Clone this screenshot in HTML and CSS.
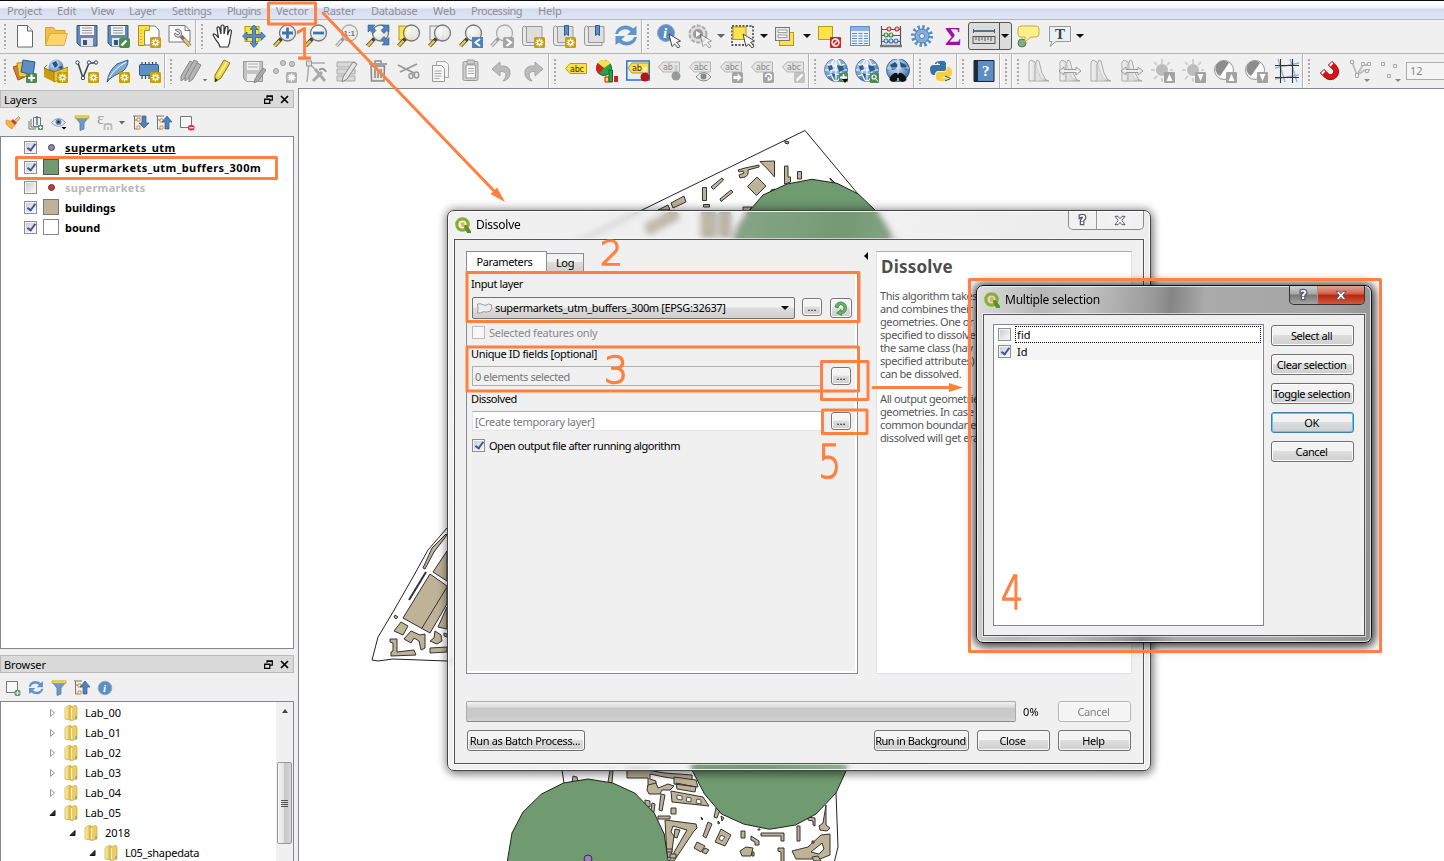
FILE: index.html
```html
<!DOCTYPE html>
<html lang="en">
<head>
<meta charset="utf-8">
<title>QGIS - Dissolve</title>
<link rel="stylesheet" href="styles.css">
</head>
<body>
<svg class="defs" width="0" height="0" aria-hidden="true">
<defs>
<linearGradient id="gfold" x1="0" x2="1"><stop offset="0" stop-color="#fff3b0"/><stop offset="1" stop-color="#dcb545"/></linearGradient>
<radialGradient id="gball" cx=".35" cy=".3" r=".8"><stop offset="0" stop-color="#fff"/><stop offset="1" stop-color="#d8dcd8"/></radialGradient>
<radialGradient id="gglobe" cx=".4" cy=".3" r=".8"><stop offset="0" stop-color="#e4effa"/><stop offset=".6" stop-color="#6d9bcb"/><stop offset="1" stop-color="#27517f"/></radialGradient>
<linearGradient id="ggrey" x1="0" x2="1"><stop offset="0" stop-color="#f4f4f4"/><stop offset="1" stop-color="#a8a8a8"/></linearGradient>

<g id="badge"><rect x="13" y="13" width="11" height="11" rx="1.5" fill="#c8a000"/><path d="M18.500 14.500v8M14.500 18.500h8M15.700 15.700l5.600 5.600M21.300 15.700l-5.600 5.600" stroke="#fff" stroke-width="1.500"/><circle cx="18.500" cy="18.500" r="1.300" fill="#c8a000"/></g>
<g id="badgeg"><rect x="13" y="13" width="11" height="11" rx="1.500" fill="#b0b0b0"/><path d="M18.500 14.500v8M14.500 18.500h8M15.700 15.700l5.600 5.600M21.300 15.700l-5.600 5.600" stroke="#fff" stroke-width="1.500"/></g>
<g id="lens"><path d="M8.500 14.500l-7 7.500" stroke="#444" stroke-width="4"/><path d="M6.500 16.700l-5 5.300" stroke="#f5c93b" stroke-width="2.400"/><circle cx="14.500" cy="9" r="8" fill="url(#gball)" fill-opacity=".85" stroke="#777" stroke-width="1.300"/></g>
<g id="lensg"><path d="M8.500 14.500l-7 7.500" stroke="#999" stroke-width="3.500"/><path d="M6.500 16.700l-5 5.300" stroke="#ddd" stroke-width="1.800"/><circle cx="14.500" cy="9" r="8" fill="#eee" stroke="#aaa" stroke-width="1.300"/></g>
<g id="tag"><path d="M1.500 11L6 6h16.500v10H6z" fill="#fbe04a" stroke="#b79a16"/><text class="abc" x="6" y="14" fill="#333">abc</text></g>
<g id="tagg"><path d="M1.500 8L6 3h16.500v10H6z" fill="#e4e4e4" stroke="#b5b5b5"/><text class="abc" x="6" y="11" fill="#888">abc</text></g>
<g id="gb"><rect x="13" y="13" width="11" height="11" rx="1.500" fill="#a5a5a5"/></g>
<g id="globe"><circle cx="12" cy="11" r="11.500" fill="url(#gglobe)" stroke="#56799f" stroke-width=".8"/><g fill="none" stroke="#fff" stroke-width="1.100"><ellipse cx="12" cy="11" rx="5" ry="11"/><path d="M12 0v22M1 11h22M3 5q9 4 18 0M3 17q9-4 18 0"/></g><path d="M4 7l4-1 1 4-4 2zM13 6l6 1 1 4-5 2zM7 14l4 1-1 4z" fill="#2c5d92"/></g>
<g id="curs"><path d="M12 10l3 12.500 2.700-2.600 3.300 4.100 2-1.600-3.300-4 3.800-1.400z" fill="#fff" stroke="#444"/></g>
<g id="hist"><path d="M2 22V3l2-2 4 2 3 9 3 7 8 3z" fill="url(#ggrey)" stroke="#aaa"/><path d="M8 22V6l2-5 2 1 3 12 4 7" fill="#e8e8e8" fill-opacity=".6" stroke="#aaa"/></g>
<g id="harr"><path d="M1 12l5-4v2.500h12V8l5 4-5 4v-2.500H6V16z" fill="#eee" stroke="#999"/></g>
<g id="sun"><g stroke="#d0d0d0" stroke-width="2"><path d="M11 0v5M11 19v4M0 11h4M3 3l3 3M19 3l-3 3M3 20l3-3M19 11h3"/></g><circle cx="11" cy="11" r="6" fill="#bcbcbc"/></g>
<g id="contrast"><circle cx="11" cy="11" r="9.500" fill="#f3f3f3" stroke="#999"/><circle cx="12" cy="11" r="7.500" fill="#fff"/><path d="M16 4a8 8 0 1 0-9 13z" fill="#8d8d8d"/></g>
<g id="up"><rect x="13" y="13" width="11" height="11" rx="1" fill="#a2a2a2"/><path d="M18.500 15l3 7h-6z" fill="#fff"/></g>
<g id="down"><rect x="13" y="13" width="11" height="11" rx="1" fill="#a2a2a2"/><path d="M18.500 22l3-7h-6z" fill="#fff"/></g>
<g id="flop"><path d="M2 1.500h20v20.500H5l-3-3z" fill="#6488b8" stroke="#36557f"/><path d="M5 2h14v9H5z" fill="#f3f3f3"/><path d="M7 4h10M7 6.500h10M7 9h10" stroke="#999"/><path d="M6 14h12v8H6z" fill="#e6e6e6"/><path d="M8 16h4v5H8z" fill="#36557f"/></g>
<g id="refresh" fill="#5f94cf"><path d="M1 10Q3 2 11 1.500q5 0 8 3L22.500 2v9H13l3.500-3.500q-3-3-7-2Q5 6.500 4 10z"/><path d="M23 13q-2 8-10 8.500-5 0-8-3L1.500 21v-9H11l-3.500 3.500q3 3 7 2 4.500-1 5.500-4.500z"/></g>
<g id="book"><path d="M5.500 18V5q0-3-2-3T1.500 5v14q0 2.500 2.500 2.500h15V19" fill="#e8e8e8" stroke="#999"/><path d="M5.500 2.500V18.500H21V2.500z" fill="#dedede" stroke="#999"/></g>

<symbol id="i-new" viewBox="0 0 24 24"><path d="M4.500 1.500h10l5 5.500v16h-15z" fill="#fff" stroke="#666"/><path d="M14.500 1.500V7h5" fill="#eee" stroke="#666"/></symbol>
<symbol id="i-open" viewBox="0 0 24 24"><path d="M1.500 21V3.500h8l2 3h9.500v4" fill="#f0bf46" stroke="#d5a033"/><path d="M1.500 21.500L6 9.500h17.500L20 21.500z" fill="#fdd469" stroke="#dfab3d"/></symbol>
<symbol id="i-save" viewBox="0 0 24 24"><use href="#flop"/></symbol>
<symbol id="i-saveas" viewBox="0 0 24 24"><use href="#flop"/><rect x="13" y="14" width="11" height="10" rx="2" fill="#4c8a50"/><path d="M15.500 21.500l5-5" stroke="#fff" stroke-width="2.300"/></symbol>
<symbol id="i-layout" viewBox="0 0 24 24"><path d="M7 2h11l4 4v15H7z" fill="#fff" stroke="#777"/><path d="M1.500 1.500h11v5h-5v15h-6z" fill="#fbe04a" stroke="#a98d1c"/><path d="M4 6v13M9 4v1" stroke="#a98d1c" stroke-dasharray="1 2"/><use href="#badge"/></symbol>
<symbol id="i-mgr" viewBox="0 0 24 24"><path d="M1 1.500h16l5 5V18H1z" fill="#fff" stroke="#777"/><path d="M17 1.500v5h5" fill="none" stroke="#777"/><path d="M13 12l9 10" stroke="#777" stroke-width="4"/><path d="M16 15l6 7" stroke="#f0c75e" stroke-width="2.500"/><path d="M7 6q3-2 5 0 3 2 1 6-3 3-6 0-1-2 0-3l3 2 2-2z" fill="#ddd" stroke="#777"/></symbol>
<symbol id="i-pan" viewBox="0 0 24 24"><path d="M9 23q-1-4-4-7l-3-5q1-2.500 4 1l1.500 2L6 4q.5-2 2.500-.5L10 10V2q1.500-2 3 0v8l1.500-7q2-1.500 2.500.5L16.500 11l2-5q2-.5 2 1.500L19 15q0 4-2 8z" fill="#fff" stroke="#333" stroke-width="1.200"/></symbol>
<symbol id="i-pansel" viewBox="0 0 24 24"><rect x="3" y="2.500" width="14" height="15" fill="#fbe34c" stroke="#b79a16"/><path d="M12 1l4 4.500H13.500v5H19V8l4.500 4-4.500 4.500v-3h-5.500V19h2.500L12 23.500l-4-4.500h2.500v-5.500H5v3L.5 12 5 8v2.500h5.500v-5H8z" fill="#5d8dc3" stroke="#2d5b91" stroke-width=".8"/></symbol>
<symbol id="i-zin" viewBox="0 0 24 24"><use href="#lens"/><path d="M14.500 3.500v11M9 9h11" stroke="#3f73b0" stroke-width="2.800"/></symbol>
<symbol id="i-zout" viewBox="0 0 24 24"><use href="#lens"/><path d="M9 9h11" stroke="#3f73b0" stroke-width="2.800"/></symbol>
<symbol id="i-z11" viewBox="0 0 24 24"><use href="#lensg"/><text x="8.500" y="12" class="z11">1:1</text></symbol>
<symbol id="i-zfull" viewBox="0 0 24 24"><use href="#lens"/><g fill="#4f82b8" stroke="#2d5b91" stroke-width=".6"><path d="M2 1h7L7 3.500l3 3-3 3-3-3L2 8z"/><path d="M23 1h-7l2 2.500-3 3 3 3 3-3L23 8z"/><path d="M23 21h-7l2-2.500-3-3 3-3 3 3 2-2z"/></g></symbol>
<symbol id="i-zsel" viewBox="0 0 24 24"><rect x="2" y="2" width="13" height="14" fill="#fbe34c" stroke="#b79a16"/><use href="#lens"/></symbol>
<symbol id="i-zlay" viewBox="0 0 24 24"><rect x="2" y="2" width="13" height="14" fill="#eee" stroke="#888"/><use href="#lens"/></symbol>
<symbol id="i-zprev" viewBox="0 0 24 24"><use href="#lens"/><rect x="13" y="13" width="11" height="11" fill="#4f82b8"/><path d="M21 15l-4.500 3.500L21 22" fill="none" stroke="#fff" stroke-width="2"/></symbol>
<symbol id="i-znext" viewBox="0 0 24 24"><use href="#lensg"/><use href="#gb"/><path d="M16.500 15l4.500 3.500-4.500 3.500" fill="none" stroke="#fff" stroke-width="2"/></symbol>
<symbol id="i-bknew" viewBox="0 0 24 24"><use href="#book"/><use href="#badge"/></symbol>
<symbol id="i-bkmark" viewBox="0 0 24 24"><use href="#book"/><path d="M12.500 1.500h4v10l-2-1.500-2 1.500z" fill="#5d8dc3" stroke="#2d5b91"/><use href="#badge"/></symbol>
<symbol id="i-bkshow" viewBox="0 0 24 24"><use href="#book"/><path d="M12.500 1.500h4v10l-2-1.500-2 1.500z" fill="#5d8dc3" stroke="#2d5b91"/></symbol>
<symbol id="i-refresh" viewBox="0 0 24 24"><use href="#refresh"/></symbol>
<symbol id="i-ident" viewBox="0 0 24 24"><circle cx="9" cy="9" r="8.500" fill="#5d8dc3" stroke="#8aa9cc"/><text x="6" y="14" class="ital">i</text><use href="#curs"/></symbol>
<symbol id="i-act" viewBox="0 0 24 24"><circle cx="10" cy="10" r="8.500" fill="#ddd" stroke="#aaa" stroke-width="2" stroke-dasharray="4 1.500"/><circle cx="10" cy="10" r="5" fill="#999"/><path d="M8 7l5 3-5 3z" fill="#fff"/><g opacity=".5"><use href="#curs"/></g></symbol>
<symbol id="i-sel" viewBox="0 0 24 24"><rect x="1" y="2" width="21" height="19" fill="none" stroke="#222" stroke-width="1.300" stroke-dasharray="2 1.500"/><rect x="2" y="3" width="13" height="12.500" fill="#fbe34c" stroke="#b79a16"/><use href="#curs"/></symbol>
<symbol id="i-attr" viewBox="0 0 24 24"><rect x="5.500" y="8.500" width="14" height="13" fill="#fbe34c" stroke="#b79a16"/><rect x="1.500" y="3.500" width="14" height="13" fill="#e6e6e6" stroke="#777"/><path d="M4 6h9v2.500H4zM4 11h9v2.500H4z" fill="#fff" stroke="#888" stroke-width=".8"/></symbol>
<symbol id="i-desel" viewBox="0 0 24 24"><rect x="1.500" y="2.500" width="14" height="13" fill="#fbe34c" stroke="#b79a16"/><rect x="13" y="13" width="11" height="11" rx="1" fill="#d3222a"/><circle cx="18.500" cy="18.500" r="3.500" fill="none" stroke="#fff" stroke-width="1.400"/><path d="M16 21l5-5" stroke="#fff" stroke-width="1.400"/></symbol>
<symbol id="i-table" viewBox="0 0 24 24"><rect x="2.500" y="2.500" width="19" height="19" fill="#e9f2fb" stroke="#5d8dc3"/><path d="M3 3h18v4H3z" fill="#8ab4de"/><path d="M4 9.500h5m1.500 0h4m1.500 0h4M4 12h5m1.500 0h4m1.500 0h4M4 14.500h5m1.500 0h4m1.500 0h4M4 17h5m1.500 0h4m1.500 0h4M4 19.500h5m1.500 0h4m1.500 0h4" stroke="#5d8dc3"/></symbol>
<symbol id="i-abac" viewBox="0 0 24 24"><path d="M2.500 2v19M21.500 2v19M2 5.500h20M2 11.500h20M2 17.500h20" stroke="#555" stroke-width="1.200"/><path d="M1 22h22" stroke="#777" stroke-width="2.500"/><g stroke-width="1.200"><g fill="#f6bcbc" stroke="#c23838"><circle cx="10" cy="5" r="2"/><circle cx="18" cy="5" r="2"/></g><g fill="#c6e6c6" stroke="#438a43"><circle cx="7" cy="11" r="2"/><circle cx="12" cy="11" r="2"/></g><g fill="#c8def3" stroke="#3f73b0"><circle cx="7" cy="17" r="2"/><circle cx="12" cy="17" r="2"/><circle cx="17" cy="17" r="2"/></g></g></symbol>
<symbol id="i-gear" viewBox="0 0 24 24"><circle cx="12" cy="12" r="9" fill="none" stroke="#5d8dc3" stroke-width="4" stroke-dasharray="2.400 2.312"/><circle cx="12" cy="12" r="7" fill="#82aedb" stroke="#4a7db5"/><circle cx="12" cy="12" r="2.500" fill="#f0f0f0" stroke="#4a7db5"/></symbol>
<symbol id="i-sum" viewBox="0 0 24 24"><text x="4" y="21" class="sum">Σ</text></symbol>
<symbol id="i-rule" viewBox="0 0 24 24"><path d="M1.500 7h21" stroke="#34567f" stroke-width="1.600"/><path d="M1.500 5v4M22.500 5v4" stroke="#34567f"/><rect x="1" y="12.500" width="22" height="7" fill="#d8d8d8" stroke="#555"/><path d="M4 13v3M7 13v4M10 13v3M13 13v4M16 13v3M19 13v4" stroke="#555"/></symbol>
<symbol id="i-tip" viewBox="0 0 24 24"><circle cx="6" cy="19" r="4" fill="#7fae7f" stroke="#557955"/><path d="M5 2h15q3 0 3 3v5q0 3-3 3h-5l-6 5V13H5q-3 0-3-3V5q0-3 3-3z" fill="#fdf08c" stroke="#c9a93a"/></symbol>
<symbol id="i-text" viewBox="0 0 24 24"><path d="M2.500 2.500h21v15H9l-6 5 2-5H2.500z" fill="#e8f1f4" stroke="#999"/><text x="8" y="15" class="tt">T</text></symbol>

<symbol id="i-dsm" viewBox="0 0 24 24"><path d="M0 8l9-3 3 13-7 3z" fill="#e07a2a" stroke="#a65317"/><path d="M4 4l12-1-1 14-9 1z" fill="#f1cf45" stroke="#a58b20"/><path d="M10 1l12 2-2 13-12-3z" fill="#5d8dc3" stroke="#2d5b91"/><rect x="13" y="14" width="11" height="10" rx="1.500" fill="#4c8a50"/><path d="M18.500 15.500v7M15 19h7" stroke="#fff" stroke-width="2"/></symbol>
<symbol id="i-gpkg" viewBox="0 0 24 24"><circle cx="12" cy="8" r="7.500" fill="url(#gglobe)"/><path d="M8 4l4-2 2 4-3 3zM14 8l4-1v4z" fill="#27517f"/><path d="M0 9l10 4v10L0 18z" fill="#c99d0d"/><path d="M10 13l14-5v9l-14 6z" fill="#e9c435" stroke="#8a6d0b" stroke-width=".7"/><path d="M0 9l3-3M0 9l10 4" stroke="#8a6d0b"/><use href="#badge"/></symbol>
<symbol id="i-shp" viewBox="0 0 24 24"><path d="M3 4l5 15 6-15h7" fill="none" stroke="#345" stroke-width="1.500"/><g fill="#fff" stroke="#345"><circle cx="2.500" cy="3.500" r="1.700"/><circle cx="14" cy="3.500" r="1.700"/><circle cx="21" cy="3.500" r="1.700"/><circle cx="8" cy="19" r="1.700"/></g><use href="#badge"/></symbol>
<symbol id="i-feather" viewBox="0 0 24 24"><path d="M1 23Q3 11 11 5l11-4Q22 8 17 12l-9 5q-3 1-7 6z" fill="#7fa9d6" stroke="#34618f"/><path d="M3 19Q9 9 20 3" fill="none" stroke="#fff"/><use href="#badge"/></symbol>
<symbol id="i-mem" viewBox="0 0 24 24"><path d="M5 3v17M8.500 3v17M12 3v17M15.500 3v17M19 3v14" stroke="#345" stroke-width="1.200"/><rect x="2.500" y="5.500" width="19" height="11" rx="1" fill="#5d8dc3" stroke="#2d5b91"/><use href="#badge"/></symbol>
<symbol id="i-pencils" viewBox="0 0 24 24"><g fill="#b5b5b5" stroke="#888"><path d="M1 17L10 2l4 2-9 15-4 3z"/><path d="M5 17L14 1l4 2-8 15-5 4z"/><path d="M9 18l8-14 4 2-8 14-4 3z"/></g></symbol>
<symbol id="i-pencil" viewBox="0 0 24 24"><path d="M4 16L13 1l6 3-9 15-6 4z" fill="#f3d33d" stroke="#8a7423"/><path d="M7 17L16 3" stroke="#fff39b" stroke-width="1.500"/><path d="M4 23v-4l3 2z" fill="#333"/></symbol>
<symbol id="i-sedit" viewBox="0 0 24 24"><path d="M1.500 2.500h19v20h-16l-3-3z" fill="#c3c3c3" stroke="#999"/><path d="M5 3h12v8H5z" fill="#f2f2f2"/><path d="M6 5h10M6 8h10" stroke="#aaa"/><path d="M5 15h9v7H5z" fill="#eee"/><path d="M13 20l8-11 3 2-8 11-4 2z" fill="#aaa" stroke="#888"/></symbol>
<symbol id="i-addpt" viewBox="0 0 24 24"><g fill="#c9c9c9" stroke="#999"><circle cx="3" cy="12" r="2.500"/><circle cx="10" cy="4" r="2.500"/><circle cx="19" cy="5" r="2.500"/></g><use href="#badgeg"/></symbol>
<symbol id="i-node" viewBox="0 0 24 24"><path d="M3 23L5 4h16M7 6l13 14" fill="none" stroke="#aaa" stroke-width="1.500"/><rect x="2.500" y="2" width="5" height="5" fill="#ddd" stroke="#999"/><path d="M9 22l9-9M11 10l10 12" stroke="#aaa" stroke-width="3"/><path d="M15 11q5-3 7 2" fill="none" stroke="#999" stroke-width="2"/></symbol>
<symbol id="i-multi" viewBox="0 0 24 24"><path d="M2 3h18v5H2zM2 10h18v5H2zM2 17h18v5H2z" fill="#d8d8d8" stroke="#aaa"/><path d="M8 18l10-15 4 2-10 15-5 3z" fill="#e5e5e5" stroke="#888"/></symbol>
<symbol id="i-trash" viewBox="0 0 24 24"><path d="M5 7h13.500l-.5 15H5.500z" fill="#e6e6e6" stroke="#888" stroke-width="1.500"/><path d="M3 5h18M9 4V2h6v2M9 10v9M12 10v9M15 10v9" fill="none" stroke="#888" stroke-width="1.500"/></symbol>
<symbol id="i-cut" viewBox="0 0 24 24"><path d="M1 6l16 8M3 13l17-8" stroke="#999" stroke-width="1.800"/><ellipse cx="19.500" cy="16" rx="2.200" ry="3" fill="none" stroke="#999" stroke-width="1.600"/><ellipse cx="14" cy="17" rx="2" ry="2.500" fill="none" stroke="#999" stroke-width="1.500"/></symbol>
<symbol id="i-copy" viewBox="0 0 24 24"><path d="M8.500 2.500h9l3 3v13h-12z" fill="#f5f5f5" stroke="#aaa"/><path d="M4.500 6.500h9l3 3v13h-12z" fill="#f5f5f5" stroke="#999"/><path d="M6.500 12h7M6.500 14.500h7M6.500 17h7M6.500 19.500h5" stroke="#aaa"/></symbol>
<symbol id="i-paste" viewBox="0 0 24 24"><rect x="4" y="2.500" width="15" height="19" rx="1.500" fill="#d0d0d0" stroke="#999"/><path d="M7 6h9.500v13H7z" fill="#f8f8f8" stroke="#999"/><rect x="8" y="1" width="7.500" height="4" rx="1" fill="#ccc" stroke="#999"/><path d="M9 9.500h6M9 12h6M9 14.500h6" stroke="#aaa"/></symbol>
<symbol id="i-undo" viewBox="0 0 24 24"><path d="M2 10l8-7v4q11-1 10 8-1 6-7 7 3-3 3-6 0-4-6-3.500V17z" fill="#bbb" stroke="#a5a5a5"/></symbol>
<symbol id="i-redo" viewBox="0 0 24 24"><path d="M22 10l-8-7v4Q3 6 4 15q1 6 7 7-3-3-3-6 0-4 6-3.500V17z" fill="#bbb" stroke="#a5a5a5"/></symbol>
<symbol id="i-tag" viewBox="0 0 24 24"><g transform="translate(0 -1.500)"><use href="#tag"/></g></symbol>
<symbol id="i-diag" viewBox="0 0 24 24"><circle cx="9" cy="9" r="7.500" fill="#2ca04a" stroke="#136a2a"/><path d="M9 9L2.500 4Q5 .5 9 1q4 0 7 3z" fill="#fbe04a"/><path d="M9 9L2.500 4Q0 9 2 13l2 2z" fill="#d61f1f"/><path d="M10 18h4v5h-4z" fill="#fbe04a" stroke="#e00"/><path d="M14 11h3.500v12H14z" fill="#2ca04a" stroke="#136a2a"/><path d="M19 17h4v6h-4z" fill="#d61f1f"/></symbol>
<symbol id="i-pin" viewBox="0 0 24 24"><rect x=".8" y="2" width="22.500" height="19" fill="#e8eefc" stroke="#2a6fd8" stroke-width="1.500"/><path d="M2 9l4-5h16.500v10H6z" fill="#fbe04a" stroke="#b79a16"/><text class="abc" x="6" y="12" fill="#333">ab</text><path d="M19 8v8" stroke="#eee" stroke-width="3"/><circle cx="19" cy="18" r="4.500" fill="#b01818"/></symbol>
<symbol id="i-lpin" viewBox="0 0 24 24"><path d="M1.500 8L6 3h16.500v10H6z" fill="#e4e4e4" stroke="#b5b5b5"/><text class="abc" x="6" y="11" fill="#888">ab</text><path d="M19 6v10" stroke="#ccc" stroke-width="3"/><circle cx="19" cy="17" r="4.500" fill="#999"/></symbol>
<symbol id="i-leye" viewBox="0 0 24 24"><use href="#tagg"/><path d="M8 18q8-9 15 0-7 8-15 0z" fill="#eee" stroke="#888"/><circle cx="15.500" cy="17.500" r="3" fill="#888"/></symbol>
<symbol id="i-lmove" viewBox="0 0 24 24"><use href="#tagg"/><use href="#gb"/><path d="M14.500 17h4v-2.500l4 4-4 4V20h-4z" fill="#fff"/></symbol>
<symbol id="i-lrot" viewBox="0 0 24 24"><use href="#tagg"/><use href="#gb"/><path d="M15.500 18a3 3 0 1 1 3 3v-3" fill="none" stroke="#fff" stroke-width="1.600"/></symbol>
<symbol id="i-ledit" viewBox="0 0 24 24"><use href="#tagg"/><g opacity=".6"><use href="#gb"/></g><path d="M15.500 21.500l6-6" stroke="#fff" stroke-width="2.300"/></symbol>
<symbol id="i-gadd" viewBox="0 0 24 24"><use href="#globe"/><rect x="15" y="14" width="9" height="9" rx="1" fill="#4c8a50"/><path d="M19.500 15v7M16 18.500h7" stroke="#fff" stroke-width="1.800"/><path d="M18 20h6l-3 4z" fill="#000"/></symbol>
<symbol id="i-gsearch" viewBox="0 0 24 24"><use href="#globe"/><rect x="15" y="14" width="9" height="10" rx="1" fill="#4c8a50"/><circle cx="19" cy="18" r="2" fill="none" stroke="#fff" stroke-width="1.200"/><path d="M20.500 19.500l2.500 3" stroke="#fff"/></symbol>
<symbol id="i-binoc" viewBox="0 0 24 24"><circle cx="12" cy="11" r="11.500" fill="url(#gglobe)" stroke="#27517f" stroke-width=".8"/><path d="M4 6l5-3 3 3-2 4-4 1zM14 3l6 3 1 5-6-2z" fill="#27517f"/><path d="M12 0v22M1 9h22" stroke="#dfeaf5" stroke-width=".8"/><path d="M3.500 21q0-4 5-7h2.500l1 2 1-2h2.500q5 3 5 7-4 4-7.500 0l0-2h-2l0 2q-3.500 4-7.500 0z" fill="#111"/></symbol>
<symbol id="i-py" viewBox="0 0 24 24"><path d="M11 2q5-1 6 2v6q0 2-3 2H9q-3 0-3 4H4q-3-1-3-6 0-4 4-4h6V5H6V4q1-2 5-2z" fill="#3871a3"/><path d="M12 22q-5 0-5-3v-4q0-2 3-2h5q3 0 3-5h2q3 1 3 6 0 4-4 4h-6v1h5v1q-1 2-6 2z" fill="#f9cf3f"/><circle cx="8.500" cy="4.500" r=".9" fill="#fff"/><path d="M16 17l5.500 2.500L16 22" fill="none" stroke="#444"/></symbol>
<symbol id="i-help" viewBox="0 0 24 24"><path d="M2 1.500h20v21H2z" fill="#5d8dc3" stroke="#222"/><path d="M2 1.500h4v21H2z" fill="#1e2c40"/><text x="10" y="17" class="q">?</text></symbol>
<symbol id="i-h1" viewBox="0 0 24 24"><use href="#hist"/></symbol>
<symbol id="i-h2" viewBox="0 0 24 24"><use href="#hist"/><use href="#harr"/></symbol>
<symbol id="i-s1" viewBox="0 0 24 24"><use href="#sun"/><use href="#up"/></symbol>
<symbol id="i-s2" viewBox="0 0 24 24"><use href="#sun"/><use href="#down"/></symbol>
<symbol id="i-c1" viewBox="0 0 24 24"><use href="#contrast"/><use href="#up"/></symbol>
<symbol id="i-c2" viewBox="0 0 24 24"><use href="#contrast"/><use href="#down"/></symbol>
<symbol id="i-grid" viewBox="0 0 24 24"><path d="M3 0l7 23M15 0l7 23M0 9l24-5M0 20l24-4" stroke="#8db2d3" stroke-width="1.300"/><path d="M5.500 0v24M17.500 0v24M0 6.500h24M0 18.500h24" stroke="#333" stroke-width="1.100"/></symbol>
<symbol id="i-mag" viewBox="0 0 24 24"><g fill="none"><path d="M4 12L8.500 16.500A5.600 5.600 0 0 0 16.500 8.500L12 4" stroke="#8c0d0d" stroke-width="6"/><path d="M4.500 12.500L8.500 16.500A5.600 5.600 0 0 0 16.500 8.500L12.500 4.500" stroke="#d31515" stroke-width="4.800"/><path d="M4.500 12.500l1.500 1.500M12.500 4.500l1.500 1.500" stroke="#fff" stroke-width="4"/></g></symbol>
<symbol id="i-vtx" viewBox="0 0 24 24"><path d="M3 3l5 13 6-10h7M8 16l8-5h5" fill="none" stroke="#bbb" stroke-width="1.800"/><g fill="#eee" stroke="#aaa"><path d="M1.500 1.500h3v3h-3zM12.500 3.500h3v3h-3zM18.500 3.500h3v3h-3zM6.500 14.500h3v4h-3zM16.500 10.500h3v3h-3z"/></g><path d="M15 20h6l-3 3z" fill="#888"/></symbol>
<symbol id="i-dots" viewBox="0 0 24 24"><g fill="#eee" stroke="#aaa"><path d="M1.500 3.500h3v3h-3zM13.500 5.500h3v3h-3zM7.500 15.500h3v3h-3z"/></g><path d="M15 20h6l-3 3z" fill="#888"/></symbol>

<symbol id="s-brush" viewBox="0 0 16 16"><path d="M1 5q4 1 5 1l4 4-3 4Q3 12 1 9z" fill="#f5b545" stroke="#e0913a" stroke-width=".7"/><path d="M6 6l2-2 4 4-2 2z" fill="#c6413b"/><path d="M9.500 5.500l4-4L15 3l-3.500 4.500z" fill="#e8c880" stroke="#a77c38" stroke-width=".7"/></symbol>
<symbol id="s-addgrp" viewBox="0 0 16 16"><path d="M1 6v8h7M3 4v8h7M5.500 2.500h7v9h-7z" fill="none" stroke="#777"/><path d="M9 10V1" stroke="#368" stroke-width="1.300"/><rect x="10" y="10" width="5" height="5" fill="#5b9a60"/><path d="M12.500 11v3M11 12.500h3" stroke="#fff"/></symbol>
<symbol id="s-eye" viewBox="0 0 16 16"><path d="M.5 7.500q7-8 14 0-7 8-14 0z" fill="#eee" stroke="#999"/><circle cx="7.500" cy="7" r="3" fill="#5a88b8"/><circle cx="7.500" cy="7" r="1.200" fill="#124"/><path d="M10.500 12h5l-2.500 2.500z" fill="#000"/></symbol>
<symbol id="s-filter" viewBox="0 0 16 16"><path d="M1 2h14L10 8v6l-4 1.500V8z" fill="#6d9aca" stroke="#47719e" stroke-width=".7"/><path d="M1 .8h14v2.500H1z" fill="#f5d94a" stroke="#b79a16" stroke-width=".6"/></symbol>
<symbol id="s-eps" viewBox="0 0 16 16"><text x="0" y="9" class="eps">ε</text><path d="M7.500 15v-4q0-2 2-2h3q2 0 2 2v4M11 12v3" fill="none" stroke="#bbb" stroke-width="1.800"/></symbol>
<symbol id="s-exp" viewBox="0 0 16 16"><path d="M1.500 1v13h3M2 5h3" fill="none" stroke="#777"/><path d="M0 1h8" stroke="#777"/><path d="M4 3h3v3H4zM4 11h3v3H4z" fill="#fff" stroke="#e8862c"/><path d="M9 1h4v7h3l-5 5-5-5h3z" fill="#4f82b8" stroke="#2d5b91" stroke-width=".7"/></symbol>
<symbol id="s-col" viewBox="0 0 16 16"><path d="M1.500 1v13h3M2 5h3" fill="none" stroke="#777"/><path d="M0 1h8" stroke="#777"/><path d="M4 4h3v3H4zM4 11h3v3H4z" fill="#fff" stroke="#e8862c"/><path d="M9 14h4V7h3l-5-6-5 6h3z" fill="#4f82b8" stroke="#2d5b91" stroke-width=".7"/></symbol>
<symbol id="s-rem" viewBox="0 0 16 16"><path d="M1.500 1.500h11v11h-11z" fill="#f7f7f7" stroke="#777"/><rect x="9" y="10" width="6.500" height="5.500" rx="2.500" fill="#e02f38"/><path d="M10.500 12.700h4" stroke="#fff" stroke-width="1.300"/></symbol>
<symbol id="s-add" viewBox="0 0 16 16"><path d="M1.500 1.500h11v11h-11z" fill="#f7f7f7" stroke="#777"/><rect x="9.500" y="10" width="6" height="6" rx="2" fill="#5b9a60"/><path d="M12.500 11v4M10.500 13h4" stroke="#fff"/></symbol>
<symbol id="s-info" viewBox="0 0 16 16"><circle cx="8" cy="8" r="6.800" fill="#5d8dc3" stroke="#8aa9cc"/><text x="6" y="12" class="ital2">i</text></symbol>
<symbol id="folder" viewBox="0 0 14 16"><path d="M1 3q2-3 6-2.500V15l-6-1z" fill="url(#gfold)" stroke="#cda93c" stroke-width=".7"/><path d="M6 2l6-1.500 1 2V14l-5 1.500-2-.5z" fill="#eccd62" stroke="#c9a437" stroke-width=".7"/><path d="M7.500 3v11" stroke="#fff6c9"/><path d="M12 11v3" stroke="#48a7e0" stroke-width="1.200"/></symbol>
<symbol id="qlogo" viewBox="0 0 16 16"><circle cx="7.500" cy="7.500" r="5.700" fill="none" stroke="#82b32d" stroke-width="3.200"/><path d="M8 8h3.500l4.500 6v2h-4z" fill="#5d8f2b"/><path d="M5.500 5.500h4v4h-3z" fill="#f4a93a"/></symbol>
<symbol id="winfloat" viewBox="0 0 9 9"><path d="M3 3V.8h5.300v4.400H6M3 1.300h5.300" fill="none" stroke="#000" stroke-width="1.200"/><path d="M.6 4h5.200v4.300H.6zM.6 4.500h5" fill="none" stroke="#000" stroke-width="1.200"/></symbol>
<symbol id="winx" viewBox="0 0 9 9"><path d="M1 1l7 7M8 1L1 8" stroke="#000" stroke-width="1.700"/></symbol>
<symbol id="tri" viewBox="0 0 8 8"><path d="M1.500.5v7L5.500 4z" fill="#fff" stroke="#999"/></symbol>
<symbol id="trio" viewBox="0 0 8 8"><path d="M6 1.500v5H1z" fill="#333" stroke="#111"/></symbol>
</defs>
</svg>

<div class="app">
<nav class="menubar">
<span>Project</span><span>Edit</span><span>View</span><span>Layer</span><span>Settings</span><span>Plugins</span><span>Vector</span><span>Raster</span><span>Database</span><span>Web</span><span>Processing</span><span>Help</span>
</nav>
<div class="toolbar one">
<div class="grp"><i class="grip"></i><svg><use href="#i-new"/></svg><svg><use href="#i-open"/></svg><svg><use href="#i-save"/></svg><svg><use href="#i-saveas"/></svg><svg><use href="#i-layout"/></svg><svg><use href="#i-mgr"/></svg></div>
<div class="grp"><i class="grip"></i><svg><use href="#i-pan"/></svg><svg><use href="#i-pansel"/></svg><svg><use href="#i-zin"/></svg><svg><use href="#i-zout"/></svg><svg><use href="#i-z11"/></svg><svg><use href="#i-zfull"/></svg><svg><use href="#i-zsel"/></svg><svg><use href="#i-zlay"/></svg><svg><use href="#i-zprev"/></svg><svg><use href="#i-znext"/></svg><svg><use href="#i-bknew"/></svg><svg><use href="#i-bkmark"/></svg><svg><use href="#i-bkshow"/></svg><svg><use href="#i-refresh"/></svg></div>
<div class="grp last"><i class="grip"></i><svg><use href="#i-ident"/></svg><svg><use href="#i-act"/></svg><b class="dd grey"></b><svg><use href="#i-sel"/></svg><b class="dd"></b><svg><use href="#i-attr"/></svg><b class="dd"></b><svg><use href="#i-desel"/></svg><svg><use href="#i-table"/></svg><svg><use href="#i-abac"/></svg><svg><use href="#i-gear"/></svg><svg><use href="#i-sum"/></svg><span class="pressed"><svg><use href="#i-rule"/></svg><b class="dd"></b></span><svg><use href="#i-tip"/></svg><svg><use href="#i-text"/></svg><b class="dd"></b></div>
</div>
<div class="toolbar two">
<div class="grp"><i class="grip"></i><svg><use href="#i-dsm"/></svg><svg><use href="#i-gpkg"/></svg><svg><use href="#i-shp"/></svg><svg><use href="#i-feather"/></svg><svg><use href="#i-mem"/></svg></div>
<div class="grp"><i class="grip"></i><svg><use href="#i-pencils"/></svg><b class="dd sub"></b><svg><use href="#i-pencil"/></svg><svg><use href="#i-sedit"/></svg><svg><use href="#i-addpt"/></svg><svg><use href="#i-node"/></svg><svg><use href="#i-multi"/></svg><svg><use href="#i-trash"/></svg><svg><use href="#i-cut"/></svg><svg><use href="#i-copy"/></svg><svg><use href="#i-paste"/></svg><svg><use href="#i-undo"/></svg><svg><use href="#i-redo"/></svg></div>
<div class="grp"><i class="grip"></i><svg><use href="#i-tag"/></svg><svg><use href="#i-diag"/></svg><svg><use href="#i-pin"/></svg><svg><use href="#i-lpin"/></svg><svg><use href="#i-leye"/></svg><svg><use href="#i-lmove"/></svg><svg><use href="#i-lrot"/></svg><svg><use href="#i-ledit"/></svg></div>
<div class="grp"><i class="grip"></i><svg><use href="#i-gadd"/></svg><svg><use href="#i-gsearch"/></svg><svg><use href="#i-binoc"/></svg></div>
<div class="grp"><i class="grip"></i><svg><use href="#i-py"/></svg></div>
<div class="grp"><i class="grip"></i><svg><use href="#i-help"/></svg></div>
<div class="grp empty"><i class="grip"></i></div>
<div class="grp"><i class="grip"></i><svg><use href="#i-h1"/></svg><svg><use href="#i-h2"/></svg><svg><use href="#i-h1"/></svg><svg><use href="#i-h2"/></svg><svg><use href="#i-s1"/></svg><svg><use href="#i-s2"/></svg><svg><use href="#i-c1"/></svg><svg><use href="#i-c2"/></svg><svg><use href="#i-grid"/></svg></div>
<div class="grp last"><i class="grip"></i><svg><use href="#i-mag"/></svg><svg><use href="#i-vtx"/></svg><svg><use href="#i-dots"/></svg><span class="num">12</span></div>
</div>

<div class="main">
<aside class="side">
<div class="ptitle"><span>Layers</span><svg><use href="#winfloat"/></svg><svg><use href="#winx"/></svg></div>
<div class="ptools"><svg><use href="#s-brush"/></svg><svg><use href="#s-addgrp"/></svg><svg><use href="#s-eye"/></svg><svg><use href="#s-filter"/></svg><svg><use href="#s-eps"/></svg><b class="dd grey"></b><svg><use href="#s-exp"/></svg><svg><use href="#s-col"/></svg><svg><use href="#s-rem"/></svg></div>
<div class="layers">
<div class="lrow"><i class="cb on"></i><i class="sw"><i class="dot purple"></i></i><span class="u wide">supermarkets_utm</span></div>
<div class="lrow"><i class="cb on"></i><i class="sw box green"></i><span class="wider">supermarkets_utm_buffers_300m</span></div>
<div class="lrow off"><i class="cb"></i><i class="sw"><i class="dot red"></i></i><span class="mid">supermarkets</span></div>
<div class="lrow"><i class="cb on"></i><i class="sw box tan"></i><span>buildings</span></div>
<div class="lrow"><i class="cb on"></i><i class="sw box white"></i><span>bound</span></div>
</div>
<div class="ptitle second"><span>Browser</span><svg><use href="#winfloat"/></svg><svg><use href="#winx"/></svg></div>
<div class="ptools b"><svg><use href="#s-add"/></svg><svg viewBox="0 0 24 24"><use href="#refresh"/></svg><svg><use href="#s-filter"/></svg><svg><use href="#s-col"/></svg><svg><use href="#s-info"/></svg></div>
<div class="browser">
<div class="tree">
<div class="trow"><svg class="t"><use href="#tri"/></svg><svg class="f"><use href="#folder"/></svg><span>Lab_00</span></div>
<div class="trow"><svg class="t"><use href="#tri"/></svg><svg class="f"><use href="#folder"/></svg><span>Lab_01</span></div>
<div class="trow"><svg class="t"><use href="#tri"/></svg><svg class="f"><use href="#folder"/></svg><span>Lab_02</span></div>
<div class="trow"><svg class="t"><use href="#tri"/></svg><svg class="f"><use href="#folder"/></svg><span>Lab_03</span></div>
<div class="trow"><svg class="t"><use href="#tri"/></svg><svg class="f"><use href="#folder"/></svg><span>Lab_04</span></div>
<div class="trow"><svg class="t"><use href="#trio"/></svg><svg class="f"><use href="#folder"/></svg><span>Lab_05</span></div>
<div class="trow in1"><svg class="t"><use href="#trio"/></svg><svg class="f"><use href="#folder"/></svg><span>2018</span></div>
<div class="trow in2"><svg class="t"><use href="#trio"/></svg><svg class="f"><use href="#folder"/></svg><span>L05_shapedata</span></div>
</div>
<div class="sbar"><i class="sup"></i><i class="thumb"><b></b><b></b><b></b><b></b></i></div>
</div>
</aside>
<section class="map">
<svg viewBox="299 89 1145 772" width="1145" height="772">
<g fill="none" stroke="#222" stroke-width="1">
<path d="M642 210L805 130.500L858 194L900 245M642 210L590 236Q520 262 470 350M447 528L428 550L413 577L393 612L378 637L372 660L378 661L393 659L447 661L520 662M562 770L564 783M836 793L838 847L834.500 861"/>
</g>
<g class="bld">
<path d="M785 141l4 1-1 2-3-1zM760 161.500l14.500-.5v16l-7-8zM738 170l7-2 14-3v2l-11 3q1 5-3 7l-5 1-1-3 5-2-1-2-4 1zM757 177l9 9-9.500 9.500-9-9zM784.500 166h3.500v11h2.500v5l-6 2zM797.500 171.500h4v7.500h-4zM711 187l11-9 1.500 2-10 9.500zM702.500 187.500h4v13h-4zM720 199l11-9 2 2-12 9.500zM671 203l13-7 2 6-13 6zM703.500 204.500h6v2.500h-6zM743 207h9l-3 4h-6zM658 210l10-5 2 5zM830 178l5 5-1 1-4-5zM771 190l4-1 1 2-5 2z"/>
<path d="M702 212h13v25h-13zM645 225l30-15 4 8-30 16zM720 212h10v25h-10z"/>
<path d="M447 535l-13 17-8 15-1 2-2-1 9-20 14-14zM447 551l-14 21 14 9zM430 574l17 12v18l-17 29-27-15zM447 587l-25 41M447 607l-9 20 9 2zM401 622l7 4-5 9-9-4zM395 615l3 2-2 2-2-2zM411 631l9 4 5-1v14l-4 2-2-9-5-3-3 5-7-4zM390 639h7v13l17-2 2 5-25 1v-4l2-1v-8l-3-1zM430 648l17-1v5l-17 1zM435 631l6 4 1 6-5 3-7-3 4-3zM444 633l3 1v3l-3-1z"/>
<path d="M426 572l-17 28" stroke-width="2"/>
<path d="M573 776l4 1 1 5-6 1zM610 770l3 1-1 12-4-1z"/>
<path d="M627 770h20l18 3 27 2v6l-28-4-14-3v5l6 2v8l-8-1v-10h-21z"/>
<path d="M648 785l8-2 2 5 10-4 6 2-4 4-8 0-2 4h-11l-2-4zM674 777l22 3 2 7-24-3zM676 783l20 4-1 5-18-3z"/>
<path d="M671 791l32 6 6 9-37-4z"/>
<path d="M661 794l4 1-3 16-3-1zM671 808h5v6h-5zM645 800l5 1v6l-5-1zM645 811l7 3-2 3-5-2zM716 808l4 2-3 8-3-1zM721 816l3 2-2 3zM826 805v20l4 3-3 3-7-1-1-4 4-3zM808 817l7 1v8l-2-1v-4l-5-1zM652 803l3 1-1 8-3-1zM701 817l2 2-1 1zM718 821l2 2-2 1z"/>
<path d="M665 820l31 4 1 4-3 3-20 30h-5l18-31-14-4-2 6 3 4-3 22-4-1zM675 829l5 1-3 8-3-1zM708 822l4 2-6 14-3-2zM697 842l8 4-4 6-7-4zM705 848l4 2-3 4-4-2zM721 829l10 6-6 11-10-4zM741 831h4v7h-4zM751 836l8 5 0 4h-4v-3l-4-2zM761 833h23v8h-3v-5h-20zM797 826h3v15h-3zM740 851l6-4 7 1-2 8-9 0zM778 848l6 0v14h-3v-10l-3-1z"/>
<path d="M830 834v21l-10 4h-24l-4-8 16-4 13-12zM822 843l-11 9 8 2 5-5z" fill-rule="evenodd"/>
<path d="M658 816h12v3h-12zM666 849h6v3h-6zM670 854h6v4h-6zM812 857l6-1 3 5h-7zM752 852l2 0v4l-2 0zM812 841l2 0 0 2-2 0zM758 829l2 0 0 1-2 0z"/>
</g>
<g fill="#fff" stroke="#333" stroke-width=".8"><path d="M677 795l5 1v4l-5-1zM687 797l4 1v4l-5-1zM697 799l4 1v4l-5-1zM721 835l4 2-3 4-3-2z"/></g>
<g fill="#709a70" stroke="#222" stroke-width="1">
<path d="M588 779l24.700 4 22 10 19.500 20 10 21 4 27-5 20H512l-4.500-21 4.500-27 11-21 18.500-18 22-11z"/>
<path d="M692.500 771l12 23 17 20 22 10 26 5.300 26-4.300 20.500-11 20-21 10-22L843 720H695z"/>
<path d="M750 210l13-15 24-11 25-4.700 25 4 21.300 10.700L875 210l11 16 7 24H731l8-25z"/>
</g>
<circle cx="588" cy="859" r="4" fill="#9a7fc0" stroke="#333"/>
</svg>
</section>
</div>
</div>

<section class="win w1">
<header><svg><use href="#qlogo"/></svg><span>Dissolve</span><div class="wbtns"><i class="wq">?</i><i class="wx"><svg viewBox="0 0 12 10"><path d="M1 .8h3l2 2.400L8 .8h3L7.800 5 11 9.200H8L6 6.800 4 9.200H1L4.200 5z"/></svg></i></div></header>
<div class="client">
<div class="upper">
<div class="left">
<div class="tabs"><span class="tab act">Parameters</span><span class="tab">Log</span></div>
<div class="pane">
<label class="l1">Input layer</label>
<div class="frow"><div class="combo"><svg viewBox="0 0 17 13"><path d="M1.500 2q3-1 6 1 3 1 5-1l3 1q1 3-1 6l-4 1q-4-1-6 1H1.500q1-4 0-9z" fill="#eee" stroke="#999"/></svg><span>supermarkets_utm_buffers_300m [EPSG:32637]</span><b class="dd"></b></div><button class="mini">...</button><button class="mini it"><svg viewBox="0 0 16 16"><path d="M2 7q1-5 6-5 6 1 5.500 6.500Q13 13 8 14l1 1.500L3.500 13 8 9.500v2q3-.5 3-3.500 0-3-3-3.500Q5 5 5 8z" fill="#67b56b" stroke="#37883f" stroke-width=".8"/></svg></button></div>
<div class="ck dis"><i class="cb"></i><span>Selected features only</span></div>
<label class="l2">Unique ID fields [optional]</label>
<div class="frow r2"><div class="inp dis">0 elements selected</div><button class="mini">...</button></div>
<label class="l3">Dissolved</label>
<div class="frow r3"><div class="inp">[Create temporary layer]</div><button class="mini">...</button></div>
<div class="ck open"><i class="cb on"></i><span>Open output file after running algorithm</span></div>
</div>
</div>
<div class="split"><i></i></div>
<article class="help"><h1>Dissolve</h1><p>This algorithm takes<br>and combines their g<br>geometries. One or<br>specified to dissolve<br>the same class (hav<br>specified attributes)<br>can be dissolved.</p><p>All output geometrie<br>geometries. In case<br>common boundaries<br>dissolved will get era</p></article>
</div>
<div class="prog"><div class="bar"></div><span>0%</span><button class="btn w73" disabled>Cancel</button></div>
<div class="foot"><button class="btn w118">Run as Batch Process...</button><i class="grow"></i><button class="btn w95">Run in Background</button><button class="btn w73">Close</button><button class="btn w73">Help</button></div>
</div>
</section>

<section class="win w2">
<header><svg><use href="#qlogo"/></svg><span>Multiple selection</span><div class="wbtns"><i class="wq">?</i><i class="wx"><svg viewBox="0 0 12 10"><path d="M1 .8h3l2 2.400L8 .8h3L7.800 5 11 9.200H8L6 6.800 4 9.200H1L4.200 5z"/></svg></i></div></header>
<div class="client">
<div class="list"><div class="li"><i class="cb"></i><span class="focus">fid</span></div><div class="li alt"><i class="cb on"></i><span>Id</span></div></div>
<div class="btncol"><button class="btn">Select all</button><button class="btn">Clear selection</button><button class="btn">Toggle selection</button><button class="btn def">OK</button><button class="btn">Cancel</button></div>
</div>
</section>

<svg class="notes" width="1444" height="861" viewBox="0 0 1444 861">
<g fill="none" stroke="#ff8040" stroke-width="3" stroke-linejoin="round">
<rect x="268.500" y="3" width="47" height="21"/>
<rect x="16.500" y="157.500" width="260" height="21"/>
<rect x="467" y="272.500" width="392" height="49"/>
<rect x="467" y="347" width="391.500" height="44"/>
<rect x="821.500" y="361.500" width="46.500" height="38"/>
<rect x="822.500" y="410" width="44.500" height="23.500"/>
<rect x="969.500" y="279.500" width="411" height="372"/>
<path d="M323 13L497 194M873 387.500h78" stroke-linecap="round"/>
</g>
<path d="M505 202l-14.500-8 6.500-6.500zM963 387.500l-14 4.500v-9z" fill="#ff8040"/>
<g class="digits"><text transform="translate(294 59) scale(.75 1)" font-size="42">1</text><text transform="translate(600 265) scale(1.050 1)" font-size="34">2</text><text transform="translate(604 383) scale(1 1)" font-size="38">3</text><text transform="translate(1001 609) scale(.76 1)" font-size="46">4</text><text transform="translate(818 478) scale(.8 1)" font-size="46">5</text></g>
</svg>
</body>
</html>
```

FILE: styles.css
```css
* { box-sizing: border-box; }
body { margin: 0; width: 1444px; height: 861px; overflow: hidden; position: relative; background: #f0f0f0; color: #000; font: 11px/14px "Noto Sans", "DejaVu Sans", sans-serif; letter-spacing: -0.35px; }
.defs { position: absolute; }
button { font: inherit; letter-spacing: inherit; padding: 0; margin: 0; color: #000; white-space: nowrap; }
i { font-style: normal; }
.abc { font: 8px "DejaVu Sans", sans-serif; letter-spacing: -.2px; }
.z11 { font: bold 8px "Liberation Sans", sans-serif; fill: #777; letter-spacing: 0; }
.ital { font: italic bold 15px "Liberation Serif", serif; fill: #fff; }
.ital2 { font: italic bold 11px "Liberation Serif", serif; fill: #fff; }
.sum { font: bold 25px "Liberation Serif", serif; fill: #a0109c; }
.tt { font: bold 15px "Liberation Serif", serif; fill: #444; }
.q { font: bold 15px "Liberation Serif", serif; fill: #fff; }
.eps { font: 17px "Liberation Serif", serif; fill: #999; }

.app { display: flex; flex-direction: column; height: 861px; }
.menubar { display: flex; height: 20px; padding: 3px 0 0 7px; border-top: 1px solid #0c0c0c; border-bottom: 1px solid #b8b8b8; background: linear-gradient(#fff 0, #f5f7fc 35%, #d5dcee 45%, #e0e6f5 100%); color: #8e8e92; letter-spacing: -.1px; line-height: 13px; white-space: nowrap; }
.menubar span { width: 50px; }
.menubar span:nth-child(2) { width: 34px; }
.menubar span:nth-child(3) { width: 38px; }
.menubar span:nth-child(4) { width: 43px; letter-spacing: -.2px; }
.menubar span:nth-child(5) { width: 55px; letter-spacing: -.3px; }
.menubar span:nth-child(6) { width: 49px; letter-spacing: -.6px; }
.menubar span:nth-child(7) { width: 47px; }
.menubar span:nth-child(8) { width: 48px; }
.menubar span:nth-child(9) { width: 62px; letter-spacing: -.3px; }
.menubar span:nth-child(10) { width: 38px; }
.menubar span:nth-child(11) { width: 67px; letter-spacing: -.5px; }

.toolbar { display: flex; height: 34px; border-bottom: 1px solid #b4b4b4; overflow: hidden; flex: none; }
.toolbar.two { border: 0; }
.grp { display: flex; align-items: center; flex: none; border-right: 1px solid #b4b4b4; }
.one .grp { padding-bottom: 1px; }
.grp + .grp { border-left: 1px solid #fff; }
.grp.last { border-right: 0; }
.grp.empty { width: 12px; }
.grip { width: 9px; height: 26px; flex: none; background: radial-gradient(circle, #aaa 1px, transparent 1.4px) 3px 0 / 4px 4px repeat-y; }
.grp + .grp .grip { width: 10px; }
.grp svg { width: 24px; height: 24px; margin: 0 3px 0 4px; flex: none; }
.dd { width: 12px; height: 4px; flex: none; background: linear-gradient(#111, #111) 50% 0 / 8px 4px no-repeat; clip-path: polygon(16% 0, 84% 0, 50% 100%); }
.dd.grey { background: #666; }
.dd.sub { width: 8px; height: 3px; margin: 18px -2px 0 -6px; background: #777; }
.pressed { display: flex; align-items: center; width: 44px; height: 28px; border: 1px solid #555; border-radius: 3px; background: linear-gradient(90deg, transparent 30px, #555 30px 31px, transparent 31px), #dcdcdc; }
.pressed svg { margin: 0 3px; }
.num { width: 60px; height: 18px; border: 1px solid #ababab; margin-left: -1px; padding: 1px 3px; color: #888; background: #f4f4f4; letter-spacing: 0; }

.main { display: flex; flex: 1; min-height: 0; }
.side { width: 298px; padding: 2px 4px 0 0; display: flex; flex-direction: column; }
.ptitle { display: flex; height: 18px; border: 1px solid #bababa; background: #dadada; align-items: center; padding: 2px 4px 0 3px; gap: 7px; flex: none; letter-spacing: -.1px; }
.ptitle span { flex: 1; }
.ptitle svg { width: 9px; height: 9px; margin-bottom: 2px; }
.ptools { display: flex; height: 28px; align-items: center; padding: 1px 0 0 5px; gap: 7px; flex: none; }
.ptools svg { width: 16px; height: 16px; }
.ptools .dd { width: 10px; margin: 0 -2px 0 -3px; }
.ptools .dd + svg { margin-left: 1px; }
.layers { height: 513px; border: 1px solid #828790; background: #fff; padding: 0 0 0 23px; flex: none; }
.lrow { display: flex; height: 20px; align-items: center; font-weight: bold; letter-spacing: 0; }
.lrow span { padding-top: 2px; }
.lrow .wide { letter-spacing: .4px; }
.lrow .wider { letter-spacing: .47px; }
.lrow .mid { letter-spacing: .3px; }
.lrow.off { color: #b8b8b8; }
.cb { width: 13px; height: 13px; flex: none; border: 1px solid #8e8f8f; background: linear-gradient(135deg, #cbcfd5, #f6f6f6) 50% / 9px 9px no-repeat #f4f4f4; display: block; position: relative; }
.cb.on::after { content: ""; position: absolute; left: 3.500px; top: 0; width: 3px; height: 7px; border: solid #41549c; border-width: 0 2px 2px 0; transform: rotate(36deg); }
.sw { width: 16px; height: 16px; margin: 0 6px 0 6px; display: flex; align-items: center; justify-content: center; flex: none; }
.box { border: 1px solid #555; }
.green { background: #709a70; }
.tan { background: #beb297; border-color: #777; }
.white { background: #fff; border-color: #888; }
.dot { width: 7px; height: 7px; border-radius: 50%; border: 1px solid #444; }
.purple { background: #9a7fc0; }
.red { background: #cc3437; }
.u { text-decoration: underline; text-underline-offset: 1px; }
.ptitle.second { margin-top: 6px; }
.browser { flex: 1; display: flex; border: 1px solid #828790; border-bottom: 0; background: #fff; overflow: hidden; }
.tree { flex: 1; padding-top: 1px; }
.trow { display: flex; align-items: center; height: 20px; padding-left: 48px; letter-spacing: -.05px; }
.trow.in1 { padding-left: 68px; }
.trow.in2 { padding-left: 88px; letter-spacing: -.25px; }
.t { width: 8px; height: 8px; margin-right: 7px; }
.f { width: 14px; height: 16px; margin-right: 7px; }
.sbar { width: 17px; background: #f0f0f0; display: flex; flex-direction: column; align-items: center; }
.sup { border: 3px solid transparent; border-bottom: 4px solid #444; border-top: 0; margin-top: 7px; }
.thumb { margin-top: 49px; width: 15px; height: 82px; border: 1px solid #999; border-radius: 2px; background: linear-gradient(90deg, #f5f5f5, #e2e2e2 45%, #c8c8c8 50%, #d4d4d4); display: flex; flex-direction: column; justify-content: center; align-items: center; gap: 1px; margin-right: 1px; }
.thumb b { width: 7px; height: 1px; background: #555; }
.map { flex: 1; border-left: 1px solid #828790; border-top: 1px solid #828790; background: #fff; overflow: hidden; }
.map svg { display: block; }
.bld { fill: #beb297; stroke: #333; stroke-width: 1; }

.win { position: absolute; display: flex; flex-direction: column; border: 1px solid #444; border-radius: 7px; backdrop-filter: blur(3px); }
.w1 { left: 447px; top: 210px; width: 704px; height: 561px; padding: 0 6px 6px; background: linear-gradient(100deg, rgba(238,238,238,.8), rgba(215,215,215,.4) 22%, rgba(150,150,150,.12) 50%, rgba(225,225,225,.6) 75%, rgba(232,232,232,.8)); box-shadow: inset 0 0 0 1px rgba(255,255,255,.85), 0 0 9px 2px rgba(0,0,0,.35), 2px 4px 8px rgba(0,0,0,.25); }
.w2 { left: 976px; top: 285px; width: 396px; height: 358px; padding: 0 6px 6px; border-color: #111; background: linear-gradient(95deg, #dcdcdc 0, #b8b8b8 15%, #c4c4c4 25%, #999 42%, #858585 46%, #aaa 54%, #a6a6a6 80%, #909090); box-shadow: inset 0 0 0 1px rgba(255,255,255,.7), 0 0 8px 3px rgba(0,0,0,.6), 2px 4px 12px rgba(0,0,0,.4); }
.win header { display: flex; height: 28px; font-size: 12px; letter-spacing: -.25px; flex: none; padding-left: 1px; }
.win header > svg { width: 16px; height: 16px; margin: 6px 5px 0 0; }
.win header > span { margin-top: 7px; flex: 1; }
.wbtns { display: flex; height: 19px; border: 1px solid #8c8c8c; border-top: 0; border-radius: 0 0 5px 5px; background: rgba(255,255,255,.25); overflow: hidden; }
.wq { width: 28px; text-align: center; font: bold 12px/18px "DejaVu Sans", sans-serif; color: #fff; -webkit-text-stroke: 2.5px #555b66; paint-order: stroke fill; border-right: 1px solid #999; letter-spacing: 0; }
.wx { width: 46px; display: flex; align-items: center; justify-content: center; }
.wx svg { width: 12px; height: 11px; overflow: visible; fill: #fff; stroke: #555b66; }
.w2 .wbtns { border-color: #333; background: linear-gradient(#d0d0d0, #a5a5a5 45%, #777 50%, #a5a5a5); }
.w2 .wx { background: linear-gradient(#e2a392, #cf5f4b 45%, #b6260f 50%, #d45a3a); }
.client { flex: 1; border: 1px solid #555; background: #f0f0f0; outline: 1px solid rgba(255,255,255,.6); }
.w1 .client { padding: 11px 11px 0; }
.upper { display: flex; height: 423px; }
.left { width: 392px; display: flex; flex-direction: column; }
.tabs { display: flex; align-items: flex-end; height: 20px; flex: none; }
.tab { height: 18px; border: 1px solid #898c95; border-bottom: 0; border-left: 0; background: linear-gradient(#f2f2f2 45%, #ddd 50%, #d0d0d0); width: 37px; text-align: center; padding-top: 2px; }
.tab.act { height: 20px; width: 81px; background: #fff; padding-top: 3px; border-left: 1px solid #898c95; letter-spacing: -.4px; padding-right: 4px; }
.pane { flex: 1; border: 1px solid #898c95; box-shadow: inset -2px -2px #fff; padding: 5px 4px 0 4px; display: flex; flex-direction: column; }
label { display: block; height: 14px; letter-spacing: -.4px; }
.frow { display: flex; align-items: center; height: 22px; margin: 6px 0 0 1px; }
.combo { width: 323px; height: 22px; border: 1px solid #707070; border-radius: 2px; background: linear-gradient(#f2f2f2 45%, #ddd 50%, #cfcfcf); display: flex; align-items: center; padding: 0 3px; }
.combo svg { width: 17px; height: 13px; margin: 0 2px 0 0; }
.combo span { flex: 1; white-space: nowrap; padding-bottom: 1px; }
.mini { width: 20px; height: 18px; border: 1px solid #777; border-radius: 3px; background: linear-gradient(#f4f4f4 45%, #ddd 50%, #cfcfcf); line-height: 12px; box-shadow: inset 0 0 0 1px #fcfcfc; letter-spacing: 0; display: block; }
.frow .mini { margin: 0 0 2px 7px; flex: none; }
.frow .it { width: 22px; height: 20px; margin: 0 0 0 8px; }
.it svg { width: 16px; height: 16px; display: block; margin: auto; }
.ck { display: flex; align-items: center; height: 16px; margin: 6px 0 0 1px; }
.ck .cb { margin: 0 4px 0 0; }
.ck span { padding-top: 1px; letter-spacing: -.48px; }
.ck.dis { color: #888; margin-top: 5px; }
.ck.dis span { letter-spacing: -.25px; }
.ck.dis .cb { border-color: #bbb; background: #f8f8f8; }
.l2 { margin-top: 7px; letter-spacing: -.35px; }
.frow.r2, .frow.r3 { margin-top: 4px; }
.inp { width: 351px; height: 20px; border: 1px solid #e2e3ea; border-top-color: #abadb3; background: #fff; color: #777; padding: 3px 2px; letter-spacing: -.3px; }
.inp.dis { background: #f0f0f0; border-color: #afafaf; letter-spacing: -.4px; }
.inp + .mini.mini { margin: 0 0 0 8px; }
.l3 { margin-top: 5px; }
.open { margin-top: 5px; }
.split { width: 18px; }
.split i { display: block; width: 0; border: 4px solid transparent; border-right: 4px solid #000; border-left: 0; margin: 1px 0 0 6px; }
.help { width: 256px; border: 1px solid #e2e3ea; border-top-color: #abadb3; background: #fff; color: #555; padding: 6px 3px; white-space: nowrap; overflow: hidden; letter-spacing: -.4px; line-height: 13px; }
.help h1 { font-size: 17px; line-height: 18px; margin: 0 0 13px 1px; color: #4d4d4d; letter-spacing: .2px; }
.help p { margin: 0 0 12px; }
.prog { display: flex; margin-top: 27px; align-items: center; height: 21px; }
.bar { width: 550px; height: 21px; border: 1px solid #aaa; border-bottom-color: #888; border-radius: 2px; background: linear-gradient(#f2f2f2, #ddd 25%, #c9c9c9 35%, #cacaca 80%, #d5d5d5); }
.prog span { width: 42px; padding-left: 7px; letter-spacing: .3px; }
.foot { display: flex; margin: 8px 1px 0 1px; gap: 8px; }
.grow { flex: 1; }
.btn { height: 21px; border: 1px solid #707070; border-radius: 3px; background: linear-gradient(#f3f3f3 45%, #ddd 50%, #cfcfcf); box-shadow: inset 0 0 0 1px #fbfbfb; padding-top: 1px; padding-right: 2px; }
.btn:disabled { color: #838383; border-color: #b5b5b5; background: #f4f4f4; }
.w73 { width: 73px; } .w95 { width: 95px; letter-spacing: -.45px; } .w118 { width: 118px; }
.w2 .client { display: flex; padding: 9px 0 0 9px; gap: 7px; }
.list { width: 271px; height: 302px; border: 1px solid #828790; background: #fff; padding: 1px; }
.li { display: flex; align-items: center; height: 17px; padding-left: 3px; }
.li span { flex: 1; height: 17px; margin: 0 1px 0 4px; padding: 2px 0 0 2px; letter-spacing: 0; }
.li .focus { border: 1px dotted #000; padding: 1px 0 0 1px; letter-spacing: .1px; }
.alt { background: #f5f5f5; }
.btncol { width: 83px; padding-top: 1px; display: flex; flex-direction: column; gap: 8px; }
.btncol .btn { letter-spacing: -.4px; }
.def { border-color: #3c7fb1; box-shadow: inset 0 0 0 1px #48d0f5; }
.notes { position: absolute; left: 0; top: 0; pointer-events: none; }
.digits { font-family: "DejaVu Sans Light", "DejaVu Sans", sans-serif; font-weight: 200; fill: #ff8040; stroke: #ff8040; stroke-width: 1.500; letter-spacing: 0; }
```
